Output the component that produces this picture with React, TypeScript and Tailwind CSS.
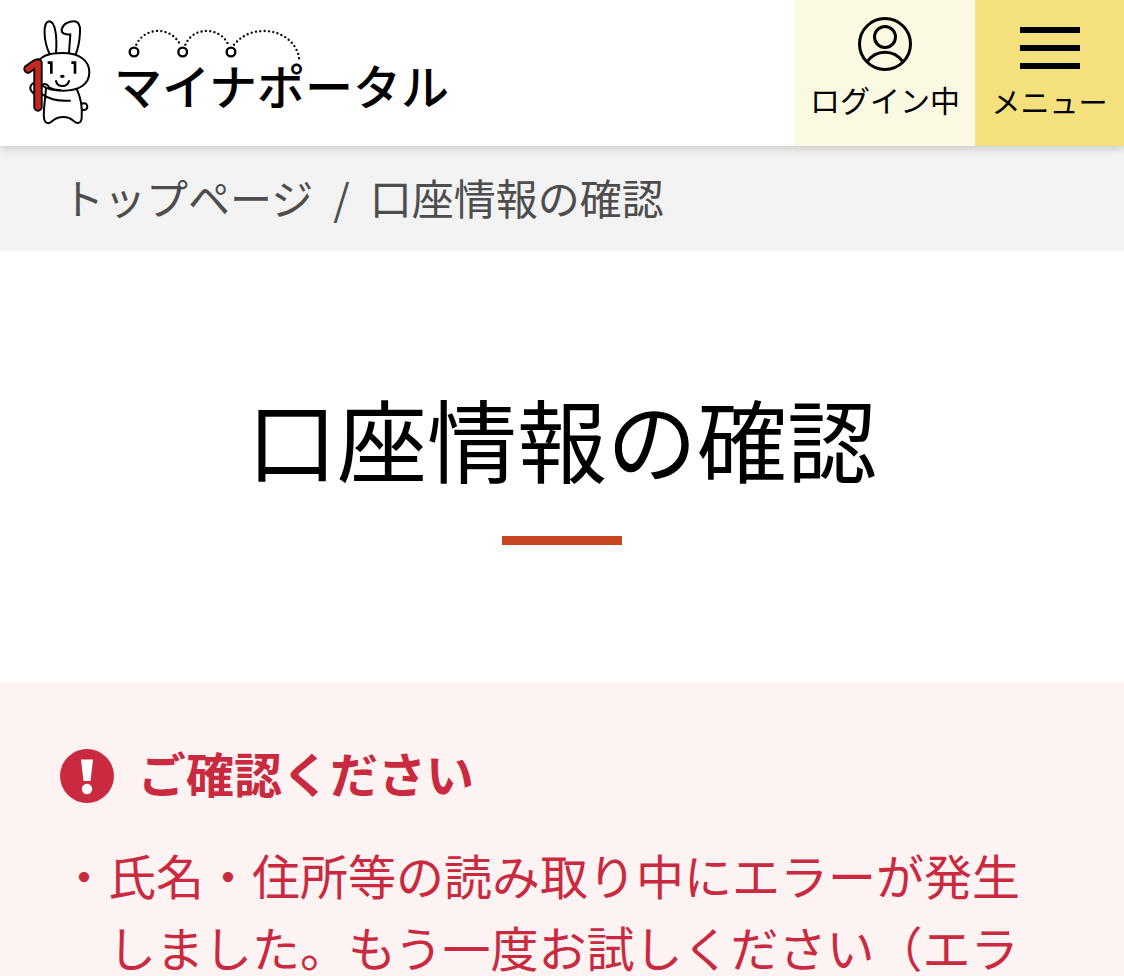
import React from 'react';

const BREADCRUMBS = [
  { label: 'トップページ', href: '#top' },
  { label: '口座情報の確認', href: '#account' },
];

const Rabbit: React.FC = () => (
  <svg viewBox="0 0 300 375" className="h-[125px] w-[100px] shrink-0" fill="none" stroke="#000" strokeWidth="6" strokeLinecap="round" strokeLinejoin="round" aria-hidden="true">
    <path d="M119 129C101 92 97 34 117 31C139 31 141 88 138 127" />
    <path d="M177 126L181 70C168 72 153 68 155 55C159 38 177 31 192 31C206 31 212 45 210 64C209 88 205 111 197 130" />
    <circle cx="222" cy="287" r="10" />
    <path d="M108 232C106 264 99 301 102 321C104 340 119 340 128 329C145 314 174 314 190 329C200 340 214 338 215 321C217 294 213 262 201 236" fill="#fff" />
    <path d="M82 158C89 137 117 126 157 126C208 126 238 149 238 184C238 220 207 239 160 239C132 239 108 233 94 221" fill="#fff" />
    <path d="M84 219C66 210 56 227 64 240C68 247 76 249 84 246" fill="#fff" />
    <path d="M54 174C62 170 74 156 84 156V288" strokeWidth="28" />
    <path d="M54 174C62 170 74 156 84 156V288" stroke="#c6281f" strokeWidth="17" />
    <path d="M97 222C106 215 113 222 118 230C128 235 139 237 151 238" fill="#fff" />
    <path d="M98 251C121 267 151 271 180 269" />
    <path d="M113 155H124V188" strokeWidth="8" strokeLinecap="butt" strokeLinejoin="miter" />
    <path d="M184 155H195V188" strokeWidth="8" strokeLinecap="butt" strokeLinejoin="miter" />
    <ellipse cx="157" cy="196" rx="7" ry="5" fill="#000" stroke="none" />
    <path d="M138 210C142 230 172 230 177 210" />
  </svg>
);

const Hops: React.FC = () => (
  <svg viewBox="0 24 600 105" className="h-[35px] w-[200px]" fill="none" stroke="#000" aria-hidden="true">
    <g strokeWidth="7" strokeLinecap="round" strokeDasharray="0 13">
      <path d="M79 77C104 22 184 22 210 77" />
      <path d="M226 77C250 22 330 22 355 77" />
      <path d="M372 77C395 50 425 36 462 36C515 36 562 70 568 122" />
    </g>
    <g strokeWidth="7">
      <circle cx="72" cy="99" r="13" />
      <circle cx="218" cy="99" r="13" />
      <circle cx="363" cy="99" r="13" />
    </g>
  </svg>
);

const UserIcon: React.FC = () => (
  <svg viewBox="0 0 54 54" className="size-[54px]" fill="none" stroke="#000" strokeWidth="3" aria-hidden="true">
    <circle cx="27" cy="27" r="25.5" />
    <circle cx="27" cy="20" r="10.5" />
    <path d="M9 45C18 32 36 32 45 45" />
  </svg>
);

const Header: React.FC = () => (
  <header className="relative z-10 flex h-[146px] shrink-0 items-stretch justify-between bg-white shadow-[0_2px_9px_rgba(0,0,0,0.2)]">
    <a href="#top" aria-label="マイナポータル" className="flex items-center pl-[10px]">
      <Rabbit />
      <span className="flex flex-col pb-[14px]">
        <Hops />
        <span className="pl-1 text-[48px] leading-[44px] font-medium whitespace-nowrap">マイナポータル</span>
      </span>
    </a>
    <div className="flex">
      <button type="button" className="flex w-[180px] flex-col items-center bg-[#fcf9e2] pt-[17px]">
        <UserIcon />
        <span className="mt-2 text-[30px] leading-[40px] whitespace-nowrap">ログイン中</span>
      </button>
      <button type="button" className="flex w-[149px] flex-col items-center bg-[#f4e07c] pt-[27px]">
        <span className="flex w-[60px] flex-col gap-3">
          <span className="h-[6px] bg-black" />
          <span className="h-[6px] bg-black" />
          <span className="h-[6px] bg-black" />
        </span>
        <span className="mt-3 text-[29px] leading-[40px] whitespace-nowrap">メニュー</span>
      </button>
    </div>
  </header>
);

const Breadcrumb: React.FC = () => (
  <nav aria-label="パンくずリスト" className="shrink-0 bg-[#f3f3f3] px-[62px] pt-[18px] pb-[22px]">
    <ol className="flex text-[42px] leading-[65px] text-[#4d4d4d]">
      {BREADCRUMBS.map((item, i) => (
        <li key={item.href} className="flex">
          {i > 0 && <span className="mx-5">/</span>}
          <a href={item.href}>{item.label}</a>
        </li>
      ))}
    </ol>
  </nav>
);

const AlertBox: React.FC = () => (
  <section role="alert" className="grow bg-[#fdf3f3] px-[60px] pt-[57px] text-[#c92a3f]">
    <h2 className="flex items-center gap-6 text-[48px] leading-[64px] font-bold">
      <svg viewBox="0 0 54 54" className="size-[54px] shrink-0" aria-hidden="true">
        <circle cx="27" cy="27" r="27" fill="#c92a3f" />
        <path d="M21 10.5H33L30.5 32H23.5Z" fill="#fff" />
        <circle cx="27" cy="40" r="5.2" fill="#fff" />
      </svg>
      <span className="pb-2">ご確認ください</span>
    </h2>
    <p className="mt-[26px] pl-12 -indent-12 text-[48px] leading-[72px]">
      ・氏名・住所等の読み取り中にエラーが発生しました。もう一度お試しください（エラ
    </p>
  </section>
);

const App: React.FC = () => {
  return (
    <div lang="ja" className="flex h-screen flex-col overflow-hidden bg-white font-['Noto_Sans_CJK_JP',sans-serif] text-black">
      <Header />
      <Breadcrumb />
      <main className="flex grow flex-col">
        <div className="flex flex-col items-center pt-[119px] pb-[138px]">
          <h1 className="text-center text-[90px] leading-[135px]">口座情報の確認</h1>
          <span className="mt-[31px] h-[9px] w-[120px] bg-[#c7461f]" />
        </div>
        <AlertBox />
      </main>
    </div>
  );
};

export default App;
